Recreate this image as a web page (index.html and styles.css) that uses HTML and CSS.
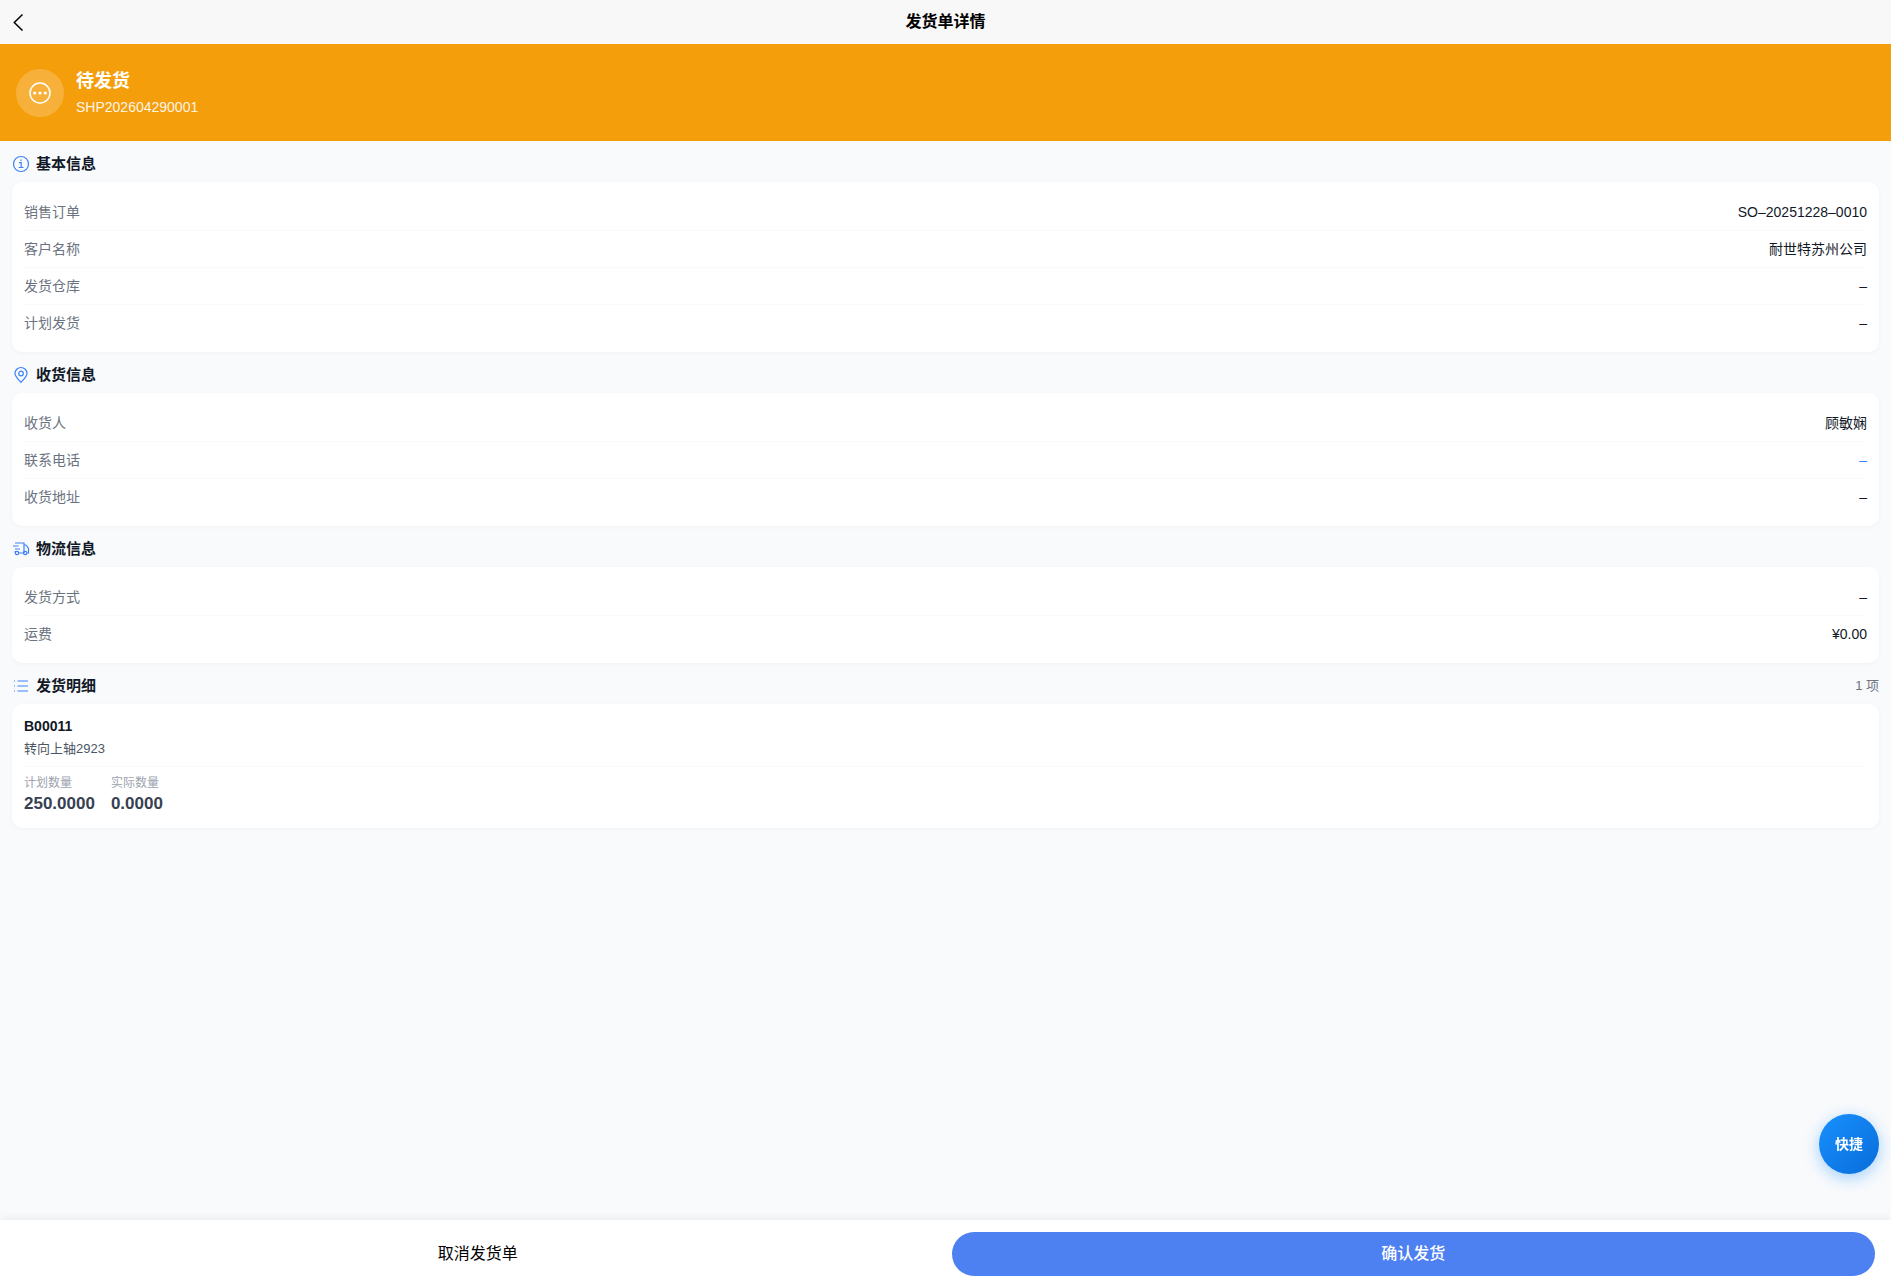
FILE: index.html
```html
<!DOCTYPE html>
<html lang="zh-CN">

<head>
    <meta charset="UTF-8">
    <meta name="viewport" content="width=device-width, initial-scale=1.0">
    <title>发货单详情</title>
    <link rel="stylesheet" href="styles.css">
</head>

<body>

    <header class="navbar">
        <button class="back" type="button" aria-label="返回">
            <svg viewBox="0 0 12 18" width="12" height="18"><path d="M10.500 1.500 2.300 9.500l8.200 8"/></svg>
        </button>
        <h1>发货单详情</h1>
    </header>

    <div class="status">
        <div class="status-icon">
            <svg viewBox="0 0 24 24" width="24" height="24">
                <circle cx="12" cy="12" r="10"/>
                <g class="dots"><circle cx="6.700" cy="12" r="1.600"/><circle cx="12" cy="12" r="1.600"/><circle cx="17.300" cy="12" r="1.600"/></g>
            </svg>
        </div>
        <div>
            <div class="status-name">待发货</div>
            <div class="status-no">SHP202604290001</div>
        </div>
    </div>

    <main>
        <section>
            <div class="title">
                <svg class="icon" viewBox="0 0 18 18"><circle cx="9" cy="9" r="7.500"/><path d="M7 7.700h2.200v4.800M6.700 12.500h4.800M8.300 5.200h1.400"/></svg>
                <h2>基本信息</h2>
            </div>
            <dl class="card">
                <div class="row"><dt>销售订单</dt><dd>SO–20251228–0010</dd></div>
                <div class="row"><dt>客户名称</dt><dd>耐世特苏州公司</dd></div>
                <div class="row"><dt>发货仓库</dt><dd>–</dd></div>
                <div class="row"><dt>计划发货</dt><dd>–</dd></div>
            </dl>
        </section>

        <section>
            <div class="title">
                <svg class="icon" viewBox="0 0 18 18"><path d="M9 16.300C6.500 13.600 3 10.800 3 7.300a6 5.800 0 0 1 12 0c0 3.500-3.500 6.300-6 9z"/><circle cx="9" cy="7.500" r="2.300"/></svg>
                <h2>收货信息</h2>
            </div>
            <dl class="card">
                <div class="row"><dt>收货人</dt><dd>顾敏娴</dd></div>
                <div class="row"><dt>联系电话</dt><dd><a href="#">–</a></dd></div>
                <div class="row"><dt>收货地址</dt><dd>–</dd></div>
            </dl>
        </section>

        <section>
            <div class="title">
                <svg class="icon" viewBox="0 0 18 18"><path d="M3 3h9v10H6.700M1 6h5.500M3 9h5M12 5h2l2.500 3.500V13h-1.300M3.300 11v2"/><circle cx="5" cy="13" r="1.700"/><circle cx="13.200" cy="13" r="1.700"/></svg>
                <h2>物流信息</h2>
            </div>
            <dl class="card">
                <div class="row"><dt>发货方式</dt><dd>–</dd></div>
                <div class="row"><dt>运费</dt><dd>¥0.00</dd></div>
            </dl>
        </section>

        <section>
            <div class="title">
                <svg class="icon" viewBox="0 0 18 18"><path d="M5.500 4H16M5.500 9H16M5.500 14H16M2 4h1M2 9h1M2 14h1"/></svg>
                <h2>发货明细</h2>
                <span class="count">1 项</span>
            </div>
            <div class="card">
                <div class="item-code">B00011</div>
                <div class="item-name">转向上轴2923</div>
                <dl class="amounts">
                    <div><dt>计划数量</dt><dd>250.0000</dd></div>
                    <div><dt>实际数量</dt><dd>0.0000</dd></div>
                </dl>
            </div>
        </section>
    </main>

    <button class="quick" type="button">快捷</button>

    <footer class="actions">
        <button class="cancel" type="button">取消发货单</button>
        <button class="confirm" type="button">确认发货</button>
    </footer>

</body>

</html>
```
FILE: styles.css
```css
* {
    box-sizing: border-box;
    margin: 0;
    padding: 0;
}

body {
    min-height: 100vh;
    display: flex;
    flex-direction: column;
    background: #f9fafc;
    color: #111827;
    font: 14px/20px "Liberation Sans", "Noto Sans CJK SC", sans-serif;
}

button {
    border: none;
    background: none;
    font: inherit;
    cursor: pointer;
}

svg {
    display: block;
    fill: none;
    stroke: currentColor;
}

/* 顶部导航 */
.navbar {
    display: grid;
    grid-template-columns: 44px 1fr 44px;
    align-items: center;
    height: 44px;
    background: #f8f8f8;
    color: #000;
}

.navbar h1 {
    font-size: 16px;
    font-weight: 700;
    text-align: center;
}

.back {
    height: 44px;
    padding-left: 12px;
}

.back svg {
    stroke-width: 1.5;
}

/* 发货状态 */
.status {
    display: flex;
    align-items: center;
    gap: 12px;
    padding: 24px 16px;
    background: #f59e0b;
    color: #fff;
}

.status-icon {
    display: flex;
    align-items: center;
    justify-content: center;
    width: 48px;
    height: 48px;
    border-radius: 50%;
    background: rgba(255, 255, 255, 0.2);
}

.status-icon svg {
    stroke-width: 1.5;
}

.dots {
    fill: #fff;
    stroke: none;
}

.status-name {
    margin-bottom: 2px;
    font-size: 18px;
    font-weight: 700;
    line-height: 27px;
}

.status-no {
    opacity: 0.9;
}

/* 信息卡片 */
main {
    flex: 1;
    padding: 0 12px 12px;
}

.title {
    display: flex;
    align-items: center;
    gap: 6px;
    padding: 12px 0 8px;
    line-height: 21px;
}

.title h2 {
    font-size: 15px;
    font-weight: 700;
}

.icon {
    width: 18px;
    height: 18px;
    color: #3b82f6;
    stroke-width: 1.2;
}

.count {
    margin-left: auto;
    color: #6b7280;
    font-size: 13px;
}

.card {
    padding: 12px;
    border-radius: 10px;
    background: #fff;
    box-shadow: 0 1px 4px rgba(0, 0, 0, 0.04);
}

.row {
    display: flex;
    justify-content: space-between;
    padding: 8px 0;
    border-bottom: 1px solid #f9fafb;
}

.row:last-child {
    padding-bottom: 7px;
    border-bottom: none;
}

.row dt {
    color: #6b7280;
}

.row a {
    color: #3b82f6;
    text-decoration: none;
}

.item-code {
    font-weight: 600;
}

.item-name {
    margin-top: 4px;
    color: #4b5563;
    font-size: 13px;
    line-height: 18px;
}

.amounts {
    display: flex;
    gap: 16px;
    margin-top: 8px;
    padding-top: 8px;
    border-top: 1px solid #f9fafb;
}

.amounts dt {
    color: #9ca3af;
    font-size: 12px;
    line-height: 17px;
}

.amounts dd {
    color: #374151;
    font-size: 17px;
    font-weight: 600;
    line-height: 24px;
}

/* 快捷按钮 */
.quick {
    position: fixed;
    right: 12px;
    bottom: 114px;
    width: 60px;
    height: 60px;
    border-radius: 50%;
    background: linear-gradient(135deg, #1890ff, #096dd9);
    box-shadow: 0 4px 16px rgba(24, 144, 255, 0.4);
    color: #fff;
    font-weight: 700;
}

/* 底部操作 */
.actions {
    position: sticky;
    bottom: 0;
    display: grid;
    grid-template-columns: 1fr 1fr;
    gap: 12px;
    padding: 12px 16px;
    background: #fff;
    box-shadow: 0 -2px 8px rgba(0, 0, 0, 0.06);
}

.actions button {
    height: 44px;
    border-radius: 22px;
    font-size: 16px;
}

.cancel {
    color: #000;
}

.confirm {
    background: #4d80f0;
    color: #fff;
    font-weight: 500;
}
```
